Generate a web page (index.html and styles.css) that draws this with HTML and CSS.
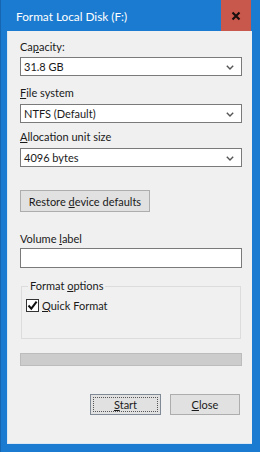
FILE: index.html
```html
<!DOCTYPE html>
<html>
<head>
<meta charset="utf-8">
<link rel="stylesheet" href="styles.css">
</head>
<body>
<div class="window">
  <div class="titlebar">
    <span class="title">Format Local Disk (F:)</span>
    <div class="close-btn">
      <svg width="10" height="10" viewBox="0 0 10 10"><path d="M1.5 1.5 L8.5 8.5 M8.5 1.5 L1.5 8.5" stroke="#1a0f0f" stroke-width="2.2" fill="none"/></svg>
    </div>
  </div>
  <div class="client">
    <div class="label l1">Ca<u>p</u>acity:</div>
    <div class="combo c1"><span>31.8 GB</span><svg class="chev" width="8" height="5" viewBox="0 0 8 5"><path d="M0.8 0.8 L4 4 L7.2 0.8" stroke="#555" stroke-width="1.4" fill="none"/></svg></div>
    <div class="label l2"><u>F</u>ile system</div>
    <div class="combo"><span>NTFS (Default)</span><svg class="chev" width="8" height="5" viewBox="0 0 8 5"><path d="M0.8 0.8 L4 4 L7.2 0.8" stroke="#555" stroke-width="1.4" fill="none"/></svg></div>
    <div class="label l3"><u>A</u>llocation unit size</div>
    <div class="combo"><span>4096 bytes</span><svg class="chev" width="8" height="5" viewBox="0 0 8 5"><path d="M0.8 0.8 L4 4 L7.2 0.8" stroke="#555" stroke-width="1.4" fill="none"/></svg></div>
    <div class="btn restore"><span>Restore <u>d</u>evice defaults</span></div>
    <div class="label l-vol">Volume <u>l</u>abel</div>
    <div class="textbox"></div>
    <div class="group">
      <span class="legend">Format <u>o</u>ptions</span>
      <div class="check-row">
        <span class="checkbox"><svg width="11" height="11" viewBox="0 0 11 11"><path d="M1.5 5.5 L4.3 8.6 L9.6 1.6" stroke="#111" stroke-width="2" fill="none"/></svg></span>
        <span class="check-label"><u>Q</u>uick Format</span>
      </div>
    </div>
    <div class="progress"></div>
    <div class="actions">
      <div class="btn default"><span class="focus"><span><u>S</u>tart</span></span></div>
      <div class="btn"><span><u>C</u>lose</span></div>
    </div>
  </div>
</div>
</body>
</html>
```
FILE: styles.css
```css
* { box-sizing: border-box; }
html, body { margin: 0; padding: 0; }
body { width: 260px; height: 452px; overflow: hidden; font-family: "Lato", "Noto Sans", sans-serif; }
.window {
  width: 260px; height: 452px;
  background: #1a7bd0;
  display: flex; flex-direction: column;
  border-left: 1px solid #1565b0;
}
.titlebar {
  height: 31px; flex: none;
  display: flex; align-items: center; justify-content: space-between;
}
.title {
  color: #fff; font-size: 11.8px; padding-left: 15px; padding-top: 1px;
}
.close-btn {
  width: 30px; height: 31px; margin-right: 9px;
  background: #c9584c;
  display: flex; align-items: center; justify-content: center;
}
.client {
  flex: 1;
  margin: 0 8px 8px 6px;
  background: #f0f0f0;
  border-left: 1px solid #dbe7f3;
  border-bottom: 1px solid #dbe7f3;
  padding: 0 10px 0 12px;
  display: flex; flex-direction: column;
  font-size: 11px; color: #1a1a1a;
}
u { text-decoration: underline; text-underline-offset: 1px; }
.label { height: 14px; line-height: 14px; margin-bottom: 4px; }
.l1 { margin-top: 9px; margin-bottom: 3px; }
.l2 { margin-top: 10px; }
.l3 { margin-top: 7px; }
.l-vol { margin-top: 20px; margin-bottom: 2px; }
.combo {
  height: 19px; flex: none; background: #fff; border: 1px solid #7a7a7a;
  display: flex; align-items: center; justify-content: space-between;
  padding: 0 7px 0 3px;
}
.chev { margin-top: 1px; }
.btn {
  height: 22px; flex: none; background: #e1e1e1; border: 1px solid #adadad;
  display: flex; align-items: center; justify-content: center;
}
.restore { width: 130px; margin-top: 23px; }
.textbox { height: 20px; flex: none; background: #fff; border: 1px solid #7a7a7a; }
.group {
  margin-top: 18px; margin-left: 1px; margin-right: 1px;
  height: 53px; flex: none;
  border: 1px solid #dcdcdc;
  position: relative;
  padding: 12px 0 0 4px;
}
.legend {
  position: absolute; top: -8px; left: 6px;
  background: #f0f0f0; padding: 0 2px; line-height: 14px;
}
.check-row { display: flex; align-items: center; height: 13px; }
.checkbox {
  width: 13px; height: 13px; border: 1px solid #333; background: #fff;
  display: flex; align-items: center; justify-content: center;
  margin-right: 3px;
}
.progress {
  margin-top: 14px; height: 13px; flex: none;
  background: #cccccc; border: 1px solid #bcbcbc;
}
.actions {
  display: flex; justify-content: flex-end; gap: 9px;
  margin-top: 28px; padding-right: 2px;
}
.actions .btn { width: 71px; height: 21px; }
.actions .btn + .btn { width: 70px; }
.default { border: 1px solid #7f8a96; }
.focus {
  width: 65px; height: 15px; border: 1px dotted #555;
  display: flex; align-items: center; justify-content: center;
}
```
